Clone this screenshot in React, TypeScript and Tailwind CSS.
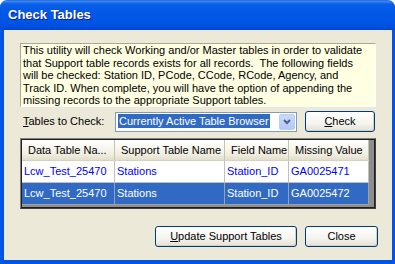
import React from "react";

const rows = [
  { table: "Lcw_Test_25470", support: "Stations", field: "Station_ID", value: "GA0025471", selected: false },
  { table: "Lcw_Test_25470", support: "Stations", field: "Station_ID", value: "GA0025472", selected: true },
];

const cols = ["w-[93px]", "w-[110px]", "w-[64px]", "w-[80px]"];

function XpButton({ className, children }: { className: string; children: React.ReactNode }) {
  return (
    <button className={`h-[21px] rounded-[3px] border border-[#003c74] bg-[linear-gradient(to_bottom,#ffffff_0%,#f5f4ef_60%,#e3e0d5_100%)] text-[11px] text-black shadow-[inset_-1px_-1px_0_#d6d0c5] ${className}`}>
      {children}
    </button>
  );
}

export default function App() {
  return (
    <div className="w-[395px] h-[264px] flex flex-col font-['Liberation_Sans',Arial,sans-serif] text-[11px] text-black select-none">
      {/* title bar */}
      <div className="h-[30px] rounded-t-[7px] bg-[linear-gradient(to_bottom,#3f8cf3_0%,#0a5fe8_10%,#0058e6_40%,#0054e3_80%,#0245d4_100%)] border-t border-[#2f6fe0] flex items-center pl-[8px] pb-[2px]">
        <span className="text-white font-bold text-[13px] [text-shadow:1px_1px_0_#0a1e8c]">Check Tables</span>
      </div>

      {/* client */}
      <div className="flex-1 border-l-[4px] border-r-[3px] border-b-[4px] border-[#0055e5] bg-[#ece9d8] pl-[16px] pt-[13px]">
        <div className="w-[356px] h-[64px] border border-t-[#aca899] border-l-[#aca899] border-b-white border-r-white bg-[#ffffe1] pl-[2px] leading-[12.5px]">
          <div className="whitespace-nowrap">This utility will check Working and/or Master tables in order to validate</div>
          <div className="whitespace-nowrap">that Support table records exists for all records.&nbsp; The following fields</div>
          <div className="whitespace-nowrap">will be checked: Station ID, PCode, CCode, RCode, Agency, and</div>
          <div className="whitespace-nowrap">Track ID. When complete, you will have the option of appending the</div>
          <div className="whitespace-nowrap">missing records to the appropriate Support tables.</div>
        </div>

        <div className="mt-[4px] flex items-center h-[21px]">
          <div className="w-[95px] pl-[3px]">
            <span className="underline underline-offset-[1px]">T</span>ables to Check:
          </div>
          <div className="w-[182px] h-[20px] border border-[#7f9db9] bg-white flex items-center pl-[2px] pr-[1px]">
            <div className="flex-1">
              <span className="bg-[#316ac5] text-white px-[1px] py-[1px]">Currently Active Table Browser</span>
            </div>
            <div className="w-[16px] h-[16px] rounded-[2px] border border-[#b9cdf6] bg-[linear-gradient(to_bottom,#c8d9fd,#b4c8f6)] flex items-center justify-center">
              <svg width="8" height="6" viewBox="0 0 8 6">
                <polyline points="1,1 4,4 7,1" fill="none" stroke="#4d6185" strokeWidth="2" />
              </svg>
            </div>
          </div>
          <XpButton className="ml-[8px] w-[70px]">
            <span className="underline underline-offset-[1px]">C</span>heck
          </XpButton>
        </div>

        {/* list view */}
        <div className="mt-[6px] w-[356px] h-[71px] border border-t-[#808080] border-l-[#808080] border-b-[#404040] border-r-[#404040] bg-[#8e8e8e]">
          <div className="h-full border border-[#202020] bg-[#8e8e8e]">
            <div className="flex h-[21px] bg-[linear-gradient(to_bottom,#ffffff_0%,#f1efe2_70%,#e2decd_100%)] border-b border-[#d6d2c2] w-[347px]">
              {["Data Table Na...", "Support Table Name", "Field Name", "Missing Value"].map((h, i) => (
                <div key={h} className={`${cols[i]} h-full flex items-center pl-[6px] border-r border-[#c7c5b2] whitespace-nowrap overflow-hidden`}>
                  {h}
                </div>
              ))}
            </div>
            {rows.map((r, idx) => (
              <div
                key={idx}
                className={`flex w-[347px] h-[22px] border-b ${r.selected ? "bg-[#316ac5] text-white border-[#a0a0a0]" : "bg-white text-[#0000ff] border-[#c0c0c0]"}`}
              >
                {[r.table, r.support, r.field, r.value].map((c, i) => (
                  <div key={i} className={`${cols[i]} h-full flex items-center pl-[2px] border-r ${r.selected ? "border-[#a0a0a0]" : "border-[#c0c0c0]"} whitespace-nowrap overflow-hidden`}>
                    {c}
                  </div>
                ))}
              </div>
            ))}
          </div>
        </div>

        <div className="mt-[17px] flex">
          <XpButton className="ml-[135px] w-[142px]">
            <span className="underline underline-offset-[1px]">U</span>pdate Support Tables
          </XpButton>
          <XpButton className="ml-[8px] w-[73px]">Close</XpButton>
        </div>
      </div>
    </div>
  );
}
